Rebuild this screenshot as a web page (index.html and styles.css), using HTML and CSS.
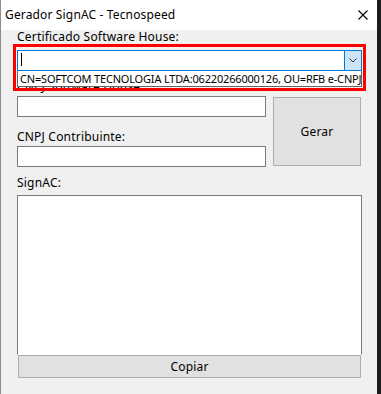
FILE: index.html
```html
<!DOCTYPE html>
<html lang="pt-BR">
<head>
    <meta charset="UTF-8">
    <title>Gerador SignAC - Tecnospeed</title>
    <link rel="stylesheet" href="styles.css">
</head>
<body>
    <div class="window">
        <div class="titlebar">
            <span class="title">Gerador SignAC - Tecnospeed</span>
            <svg class="close" width="10" height="10" viewBox="0 0 10 10">
                <path d="M0.5 0.5 L9.5 9.5 M9.5 0.5 L0.5 9.5" stroke="#000" stroke-width="1.1" fill="none"/>
            </svg>
        </div>

        <div class="content">
            <label class="label cert-label">Certificado Software House:</label>
            <div class="combo-wrap">
                <div class="combo">
                    <span class="caret"></span>
                    <span class="combo-btn">
                        <svg width="8" height="5" viewBox="0 0 8 5">
                            <path d="M0.5 0.5 L4 4 L7.5 0.5" stroke="#333" stroke-width="1" fill="none"/>
                        </svg>
                    </span>
                </div>
                <div class="combo-list">CN=SOFTCOM TECNOLOGIA LTDA:06220266000126, OU=RFB e-CNPJ</div>
                <div class="highlight"></div>
            </div>

            <div class="grid">
                <div class="fields">
                    <label class="label">CNPJ Software House:</label>
                    <div class="input first"></div>
                    <label class="label">CNPJ Contribuinte:</label>
                    <div class="input"></div>
                </div>
                <button class="btn gerar">Gerar</button>
            </div>

            <label class="label sign-label">SignAC:</label>
            <div class="textarea"></div>
            <button class="btn copiar">Copiar</button>
        </div>
    </div>
</body>
</html>
```

FILE: styles.css
```css
body {
    margin: 0;
    background: #1b1b1b;
    font-family: "Noto Sans", "Open Sans", sans-serif;
    font-size: 12px;
    color: #000;
}
.window {
    width: 376px;
    height: 394px;
    background: #f0f0f0;
    border-left: 1px solid #8c8c8c;
    overflow: hidden;
}
.titlebar {
    height: 30px;
    background: #fff;
    display: flex;
    align-items: center;
    justify-content: space-between;
    padding: 0 9px 0 4px;
}
.title {
    font-size: 12px;
    letter-spacing: 0.15px;
    margin-top: -1px;
}
.close {
    margin-top: -1px;
}
.content {
    padding: 0 15px 0 16px;
}
.label {
    display: block;
    line-height: 15px;
    height: 15px;
    letter-spacing: 0.2px;
    white-space: nowrap;
}
.cert-label {
    margin: -1px 0 6px;
}
.combo-wrap {
    position: relative;
    height: 21px;
}
.combo {
    height: 19px;
    border: 1px solid #0078d7;
    background: #fff;
    display: flex;
    justify-content: space-between;
}
.caret {
    width: 1px;
    height: 13px;
    background: #000;
    margin: 2px 0 0 3px;
}
.combo-btn {
    width: 16px;
    background: #cce4f7;
    border-left: 1px solid #0078d7;
    display: flex;
    align-items: center;
    justify-content: center;
}
.combo-list {
    position: absolute;
    top: 21px;
    left: 0;
    right: 0;
    height: 15px;
    line-height: 15px;
    font-size: 11px;
    letter-spacing: -0.18px;
    background: #fff;
    border: 1px solid #646464;
    border-top: none;
    padding-left: 2px;
    white-space: nowrap;
    overflow: hidden;
    z-index: 2;
}
.highlight {
    position: absolute;
    top: -6px;
    left: -4px;
    width: 347px;
    height: 41px;
    border: 3px solid #f00;
    z-index: 3;
}
.grid {
    display: grid;
    grid-template-columns: 249px 88px;
    column-gap: 7px;
    align-items: start;
    margin-top: 8px;
}
.fields .label {
    margin-bottom: 2px;
}
.input {
    height: 19px;
    background: #fff;
    border: 1px solid #7a7a7a;
}
.input.first {
    margin-bottom: 12px;
}
.btn {
    font-family: inherit;
    font-size: 12px;
    letter-spacing: 0.2px;
    color: #000;
    background: #e1e1e1;
    border: 1px solid #adadad;
    padding: 0;
}
.gerar {
    margin-top: 18px;
    height: 69px;
}
.sign-label {
    margin: 8px 0 5px;
}
.textarea {
    height: 158px;
    background: #fff;
    border: 1px solid #7a7a7a;
    border-bottom-color: #fff;
}
.copiar {
    display: block;
    width: 343px;
    height: 23px;
    margin: 0 0 0 1px;
}
```
